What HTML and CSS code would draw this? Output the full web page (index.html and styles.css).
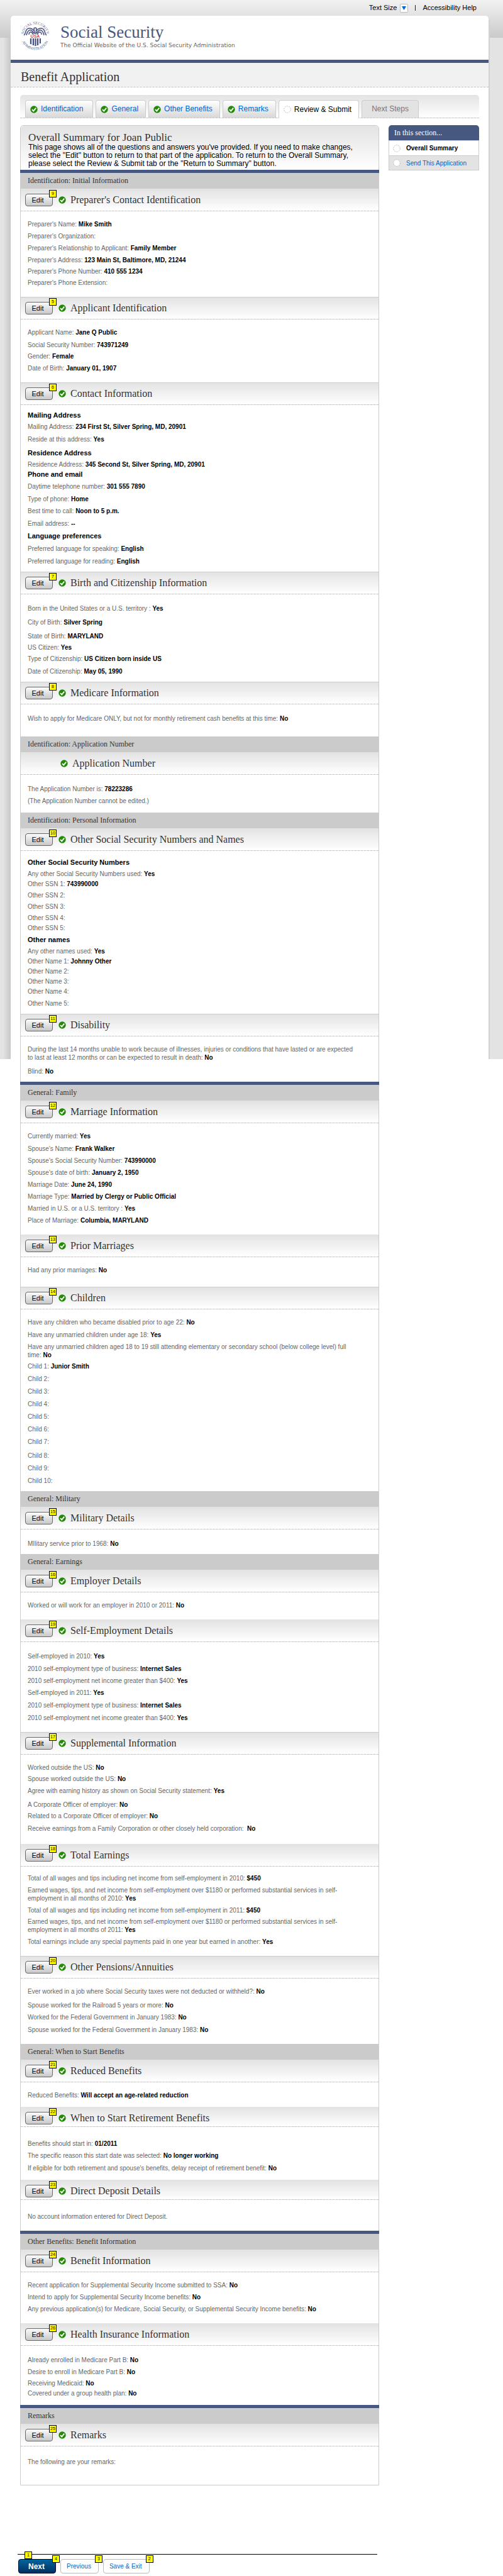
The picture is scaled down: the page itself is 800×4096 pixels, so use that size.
FILE: index.html
```html
<!DOCTYPE html>
<html lang="en">
<head>
<meta charset="utf-8">
<title>Benefit Application - Social Security</title>
<meta name="viewport" content="width=device-width, initial-scale=1">
<link rel="stylesheet" href="styles.css">
</head>
<body>
<svg class="defs" aria-hidden="true">
  <symbol id="check" viewBox="0 0 12 12"><circle cx="6" cy="6" r="5.7" fill="#238a06"/><path d="M3 6.1l2.3 2.4L9.2 3.6" fill="none" stroke="#fff" stroke-width="1.9"/></symbol>
  <symbol id="ring" viewBox="0 0 12 12"><circle cx="6" cy="6" r="5.3" fill="#fff" stroke="#bbb" stroke-dasharray="2 1.3"/></symbol>
</svg>

<nav class="topbar" aria-label="Tools">
  <span>Text Size</span>
  <button class="size-btn" type="button" aria-label="Change text size"><svg width="7" height="6" viewBox="0 0 7 6"><path d="M0 0h7L3.500 6z" fill="#06c"/></svg></button>
  <span class="divider"></span>
  <a href="#">Accessibility Help</a>
</nav>

<div class="page">
  <header class="masthead">
    <svg class="seal" viewBox="0 0 48 48" role="img" aria-label="Social Security Administration seal">
      <defs>
        <path id="arc-top" d="M5.500 24a18.500 18.500 0 0 1 37 0"/>
        <path id="arc-bottom" d="M1.500 24a22.500 22.500 0 0 0 45 0"/>
      </defs>
      <g class="seal-ring">
        <text><textPath href="#arc-top" startOffset="50%" text-anchor="middle">SOCIAL SECURITY</textPath></text>
        <text><textPath href="#arc-bottom" startOffset="50%" text-anchor="middle">ADMINISTRATION</textPath></text>
      </g>
      <g fill="none" stroke="#46507f" stroke-width="1.500">
        <path d="M6 23c2-1 2-3 3-6s3-5 6-5 5 1 7 4M42 23c-2-1-2-3-3-6s-3-5-6-5-5 1-7 4"/>
        <path d="M10 23c1-4 2-7 5-8s5 2 7 5M38 23c-1-4-2-7-5-8s-5 2-7 5"/>
        <path d="M14 22c0-2 1-4 3-4s3 2 4 4M34 22c0-2-1-4-3-4s-3 2-4 4"/>
        <path d="M22 12l2-1 2 1-1 8h-2z"/>
      </g>
      <text class="seal-usa" x="24" y="27" text-anchor="middle">USA</text>
      <g fill="#46507f"><path d="M15 28h18v7c0 3-4 4-9 6-5-2-9-3-9-6z" fill="#e2e4ee"/><path d="M16 28h2v9h-2zM20 28h2v11h-2zM23.500 28h2v12h-2zM27 28h2v11h-2zM31 28h2v8h-2z"/></g>
    </svg>
    <div>
      <div class="brand">Social Security</div>
      <div class="tagline">The Official Website of the U.S. Social Security Administration</div>
    </div>
  </header>
  <h1 class="app-title">Benefit Application</h1>

  <nav class="tabs" aria-label="Application steps">
    <a class="tab" href="#"><svg class="icon"><use href="#check"/></svg>Identification</a>
    <a class="tab" href="#"><svg class="icon"><use href="#check"/></svg>General</a>
    <a class="tab" href="#"><svg class="icon"><use href="#check"/></svg>Other Benefits</a>
    <a class="tab" href="#"><svg class="icon"><use href="#check"/></svg>Remarks</a>
    <a class="tab current" href="#" aria-current="step"><svg class="icon"><use href="#ring"/></svg>Review &amp; Submit</a>
    <span class="tab pending">Next Steps</span>
  </nav>

  <div class="columns">
    <main class="summary">
      <div class="intro">
        <h2>Overall Summary for Joan Public</h2>
        <p>This page shows all of the questions and answers you've provided. If you need to make changes, select the "Edit" button to return to that part of the application. To return to the Overall Summary, please select the Review &amp; Submit tab or the "Return to Summary" button.</p>
      </div>

      <h2 class="band major">Identification: Initial Information</h2>
      <div class="bar"><span class="tagged"><button class="edit" type="button">Edit</button><i class="num">9</i></span><svg class="icon"><use href="#check"/></svg><h3>Preparer's Contact Identification</h3></div>
      <div class="body pt14 pb16">
        <p>Preparer's Name: <b>Mike Smith</b></p>
        <p>Preparer's Organization:</p>
        <p>Preparer's Relationship to Applicant: <b>Family Member</b></p>
        <p>Preparer's Address: <b>123 Main St, Baltimore, MD, 21244</b></p>
        <p class="g5">Preparer's Phone Number: <b>410 555 1234</b></p>
        <p class="g5">Preparer's Phone Extension:</p>
      </div>

      <div class="bar"><span class="tagged"><button class="edit" type="button">Edit</button><i class="num">5</i></span><svg class="icon"><use href="#check"/></svg><h3>Applicant Identification</h3></div>
      <div class="body pt14 pb16">
        <p>Applicant Name: <b>Jane Q Public</b></p>
        <p class="g7">Social Security Number: <b>743971249</b></p>
        <p class="g5">Gender: <b>Female</b></p>
        <p>Date of Birth: <b>January 01, 1907</b></p>
      </div>

      <div class="bar"><span class="tagged"><button class="edit" type="button">Edit</button><i class="num">6</i></span><svg class="icon"><use href="#check"/></svg><h3>Contact Information</h3></div>
      <div class="body pt10 pb10">
        <h4>Mailing Address</h4>
        <p class="g5">Mailing Address: <b>234 First St, Silver Spring, MD, 20901</b></p>
        <p class="g7">Reside at this address: <b>Yes</b></p>
        <h4 class="g9">Residence Address</h4>
        <p class="g5">Residence Address: <b>345 Second St, Silver Spring, MD, 20901</b></p>
        <h4 class="g3">Phone and email</h4>
        <p>Daytime telephone number: <b>301 555 7890</b></p>
        <p class="g7">Type of phone: <b>Home</b></p>
        <p>Best time to call: <b>Noon to 5 p.m.</b></p>
        <p class="g7">Email address: <b>--</b></p>
        <h4 class="g7">Language preferences</h4>
        <p class="g7">Preferred language for speaking: <b>English</b></p>
        <p class="g7">Preferred language for reading: <b>English</b></p>
      </div>

      <div class="bar"><span class="tagged"><button class="edit" type="button">Edit</button><i class="num">7</i></span><svg class="icon"><use href="#check"/></svg><h3>Birth and Citizenship Information</h3></div>
      <div class="body pt16 pb10">
        <p>Born in the United States or a U.S. territory : <b>Yes</b></p>
        <p class="g9">City of Birth: <b>Silver Spring</b></p>
        <p class="g9">State of Birth: <b>MARYLAND</b></p>
        <p class="g5">US Citizen: <b>Yes</b></p>
        <p class="g5">Type of Citizenship: <b>US Citizen born inside US</b></p>
        <p class="g7">Date of Citizenship: <b>May 05, 1990</b></p>
      </div>

      <div class="bar"><span class="tagged"><button class="edit" type="button">Edit</button><i class="num">8</i></span><svg class="icon"><use href="#check"/></svg><h3>Medicare Information</h3></div>
      <div class="body pt16 pb22">
        <p>Wish to apply for Medicare ONLY, but not for monthly retirement cash benefits at this time: <b>No</b></p>
      </div>

      <h2 class="band">Identification: Application Number</h2>
      <div class="bar fixed"><svg class="icon"><use href="#check"/></svg><h3>Application Number</h3></div>
      <div class="body pt16 pb12">
        <p>The Application Number is: <b>78223286</b></p>
        <p>(The Application Number cannot be edited.)</p>
      </div>

      <h2 class="band">Identification: Personal Information</h2>
      <div class="bar"><span class="tagged"><button class="edit" type="button">Edit</button><i class="num">10</i></span><svg class="icon"><use href="#check"/></svg><h3>Other Social Security Numbers and Names</h3></div>
      <div class="body pt12 pb10">
        <h4>Other Social Security Numbers</h4>
        <p class="g5">Any other Social Security Numbers used: <b>Yes</b></p>
        <p class="g3">Other SSN 1: <b>743990000</b></p>
        <p class="g5">Other SSN 2:</p>
        <p class="g5">Other SSN 3:</p>
        <p class="g5">Other SSN 4:</p>
        <p class="g3">Other SSN 5:</p>
        <h4>Other names</h4>
        <p class="g5">Any other names used: <b>Yes</b></p>
        <p class="g3">Other Name 1: <b>Johnny Other</b></p>
        <p class="g3">Other Name 2:</p>
        <p class="g3">Other Name 3:</p>
        <p class="g3">Other Name 4:</p>
        <p>Other Name 5:</p>
      </div>

      <div class="bar"><span class="tagged"><button class="edit" type="button">Edit</button><i class="num">11</i></span><svg class="icon"><use href="#check"/></svg><h3>Disability</h3></div>
      <div class="body pt14 pb10">
        <p>During the last 14 months unable to work because of illnesses, injuries or conditions that have lasted or are expected to last at least 12 months or can be expected to result in death: <b>No</b></p>
        <p class="g9">Blind: <b>No</b></p>
      </div>

      <h2 class="band major">General: Family</h2>
      <div class="bar"><span class="tagged"><button class="edit" type="button">Edit</button><i class="num">12</i></span><svg class="icon"><use href="#check"/></svg><h3>Marriage Information</h3></div>
      <div class="body pt14 pb16">
        <p>Currently married: <b>Yes</b></p>
        <p class="g7">Spouse's Name: <b>Frank Walker</b></p>
        <p>Spouse's Social Security Number: <b>743990000</b></p>
        <p>Spouse's date of birth: <b>January 2, 1950</b></p>
        <p>Marriage Date: <b>June 24, 1990</b></p>
        <p>Marriage Type: <b>Married by Clergy or Public Official</b></p>
        <p>Married in U.S. or a U.S. territory : <b>Yes</b></p>
        <p>Place of Marriage: <b>Columbia, MARYLAND</b></p>
      </div>

      <div class="bar flat"><span class="tagged"><button class="edit" type="button">Edit</button><i class="num">13</i></span><svg class="icon"><use href="#check"/></svg><h3>Prior Marriages</h3></div>
      <div class="body pt14 pb20">
        <p>Had any prior marriages: <b>No</b></p>
      </div>

      <div class="bar"><span class="tagged"><button class="edit" type="button">Edit</button><i class="num">14</i></span><svg class="icon"><use href="#check"/></svg><h3>Children</h3></div>
      <div class="body pt14 pb10">
        <p>Have any children who became disabled prior to age 22: <b>No</b></p>
        <p class="g7">Have any unmarried children under age 18: <b>Yes</b></p>
        <p>Have any unmarried children aged 18 to 19 still attending elementary or secondary school (below college level) full time: <b>No</b></p>
        <p class="g5">Child 1: <b>Junior Smith</b></p>
        <p class="g7">Child 2:</p>
        <p class="g7">Child 3:</p>
        <p class="g7">Child 4:</p>
        <p class="g7">Child 5:</p>
        <p class="g7">Child 6:</p>
        <p class="g7">Child 7:</p>
        <p class="g9">Child 8:</p>
        <p class="g7">Child 9:</p>
        <p class="g7">Child 10:</p>
      </div>

      <h2 class="band">General: Military</h2>
      <div class="bar"><span class="tagged"><button class="edit" type="button">Edit</button><i class="num">15</i></span><svg class="icon"><use href="#check"/></svg><h3>Military Details</h3></div>
      <div class="body pt16 pb10">
        <p>MIlitary service prior to 1968: <b>No</b></p>
      </div>

      <h2 class="band">General: Earnings</h2>
      <div class="bar"><span class="tagged"><button class="edit" type="button">Edit</button><i class="num">16</i></span><svg class="icon"><use href="#check"/></svg><h3>Employer Details</h3></div>
      <div class="body pt14 pb16">
        <p>Worked or will work for an employer in 2010 or 2011: <b>No</b></p>
      </div>

      <div class="bar flat"><span class="tagged"><button class="edit" type="button">Edit</button><i class="num">19</i></span><svg class="icon"><use href="#check"/></svg><h3>Self-Employment Details</h3></div>
      <div class="body pt16 pb16">
        <p>Self-employed in 2010: <b>Yes</b></p>
        <p class="g7">2010 self-employment type of business: <b>Internet Sales</b></p>
        <p>2010 self-employment net income greater than $400: <b>Yes</b></p>
        <p>Self-employed in 2011: <b>Yes</b></p>
        <p class="g7">2010 self-employment type of business: <b>Internet Sales</b></p>
        <p class="g7">2010 self-employment net income greater than $400: <b>Yes</b></p>
      </div>

      <div class="bar"><span class="tagged"><button class="edit" type="button">Edit</button><i class="num">17</i></span><svg class="icon"><use href="#check"/></svg><h3>Supplemental Information</h3></div>
      <div class="body pt14 pb18">
        <p>Worked outside the US: <b>No</b></p>
        <p class="g5">Spouse worked outside the US: <b>No</b></p>
        <p>Agree with earning history as shown on Social Security statement: <b>Yes</b></p>
        <p class="g9">A Corporate Officer of employer: <b>No</b></p>
        <p class="g5">Related to a Corporate Officer of employer: <b>No</b></p>
        <p class="g7">Receive earnings from a Family Corporation or other closely held corporation: &nbsp;<b>No</b></p>
      </div>

      <div class="bar flat"><span class="tagged"><button class="edit" type="button">Edit</button><i class="num">18</i></span><svg class="icon"><use href="#check"/></svg><h3>Total Earnings</h3></div>
      <div class="body pt12 pb16">
        <p>Total of all wages and tips including net income from self-employment in 2010: <b>$450</b></p>
        <p>Earned wages, tips, and net income from self-employment over $1180 or performed substantial services in self-employment in all months of 2010: <b>Yes</b></p>
        <p>Total of all wages and tips including net income from self-employment in 2011: <b>$450</b></p>
        <p class="g5">Earned wages, tips, and net income from self-employment over $1180 or performed substantial services in self-employment in all months of 2011: <b>Yes</b></p>
        <p>Total earnings include any special payments paid in one year but earned in another: <b>Yes</b></p>
      </div>

      <div class="bar"><span class="tagged"><button class="edit" type="button">Edit</button><i class="num">20</i></span><svg class="icon"><use href="#check"/></svg><h3>Other Pensions/Annuities</h3></div>
      <div class="body pt14 pb16">
        <p>Ever worked in a job where Social Security taxes were not deducted or withheld?: <b>No</b></p>
        <p class="g9">Spouse worked for the Railroad 5 years or more: <b>No</b></p>
        <p>Worked for the Federal Government in January 1983: <b>No</b></p>
        <p class="g7">Spouse worked for the Federal Government in January 1983: <b>No</b></p>
      </div>

      <h2 class="band">General: When to Start Benefits</h2>
      <div class="bar"><span class="tagged"><button class="edit" type="button">Edit</button><i class="num">21</i></span><svg class="icon"><use href="#check"/></svg><h3>Reduced Benefits</h3></div>
      <div class="body pt14 pb12">
        <p>Reduced Benefits: <b>Will accept an age-related reduction</b></p>
      </div>

      <div class="bar flat compact"><span class="tagged"><button class="edit" type="button">Edit</button><i class="num">22</i></span><svg class="icon"><use href="#check"/></svg><h3>When to Start Retirement Benefits</h3></div>
      <div class="body pt20 pb12">
        <p>Benefits should start in: <b>01/2011</b></p>
        <p>The specific reason this start date was selected: <b>No longer working</b></p>
        <p class="g7">If eligible for both retirement and spouse's benefits, delay receipt of retirement benefit: <b>No</b></p>
      </div>

      <div class="bar flat compact"><span class="tagged"><button class="edit" type="button">Edit</button><i class="num">23</i></span><svg class="icon"><use href="#check"/></svg><h3>Direct Deposit Details</h3></div>
      <div class="body pt20 pb16">
        <p>No account information entered for Direct Deposit.</p>
      </div>

      <h2 class="band major">Other Benefits: Benefit Information</h2>
      <div class="bar"><span class="tagged"><button class="edit" type="button">Edit</button><i class="num">24</i></span><svg class="icon"><use href="#check"/></svg><h3>Benefit Information</h3></div>
      <div class="body pt14 pb16">
        <p>Recent application for Supplemental Security Income submitted to SSA: <b>No</b></p>
        <p>Intend to apply for Supplemental Security Income benefits: <b>No</b></p>
        <p>Any previous application(s) for Medicare, Social Security, or Supplemental Security Income benefits: <b>No</b></p>
      </div>

      <div class="bar flat"><span class="tagged"><button class="edit" type="button">Edit</button><i class="num">26</i></span><svg class="icon"><use href="#check"/></svg><h3>Health Insurance Information</h3></div>
      <div class="body pt16 pb12">
        <p>Already enrolled in Medicare Part B: <b>No</b></p>
        <p>Desire to enroll in Medicare Part B: <b>No</b></p>
        <p class="g5">Receiving Medicaid: <b>No</b></p>
        <p class="g3">Covered under a group health plan: <b>No</b></p>
      </div>

      <h2 class="band major">Remarks</h2>
      <div class="bar"><span class="tagged"><button class="edit" type="button">Edit</button><i class="num">25</i></span><svg class="icon"><use href="#check"/></svg><h3>Remarks</h3></div>
      <div class="body pt18 pb30">
        <p>The following are your remarks:</p>
      </div>
    </main>

    <aside class="section-nav">
      <h2>In this section...</h2>
      <a class="here" href="#" aria-current="page"><svg class="icon"><use href="#ring"/></svg>Overall Summary</a>
      <a href="#"><svg class="icon"><use href="#ring"/></svg>Send This Application</a>
    </aside>
  </div>

  <footer class="actions">
    <i class="num rule-num">1</i>
    <span class="tagged"><button class="btn primary" type="button">Next</button><i class="num">4</i></span>
    <span class="tagged"><button class="btn" type="button">Previous</button><i class="num">3</i></span>
    <span class="tagged"><button class="btn" type="button">Save &amp; Exit</button><i class="num">2</i></span>
  </footer>
</div>
</body>
</html>
```
FILE: styles.css
```css
* { box-sizing: border-box; }

body {
  margin: 0;
  font: 10px/13px "Liberation Sans", Arial, sans-serif;
  color: #000;
  background-color: #fff;
  background-image:
    linear-gradient(to right, #e3e3e3, #c8c8c8),
    linear-gradient(#d2d2d2, #d2d2d2),
    linear-gradient(#f2f2f2, #cacaca),
    linear-gradient(#e3e3e3, #e3e3e3);
  background-position: 5px 60px, right 21px top 32px, 0 0, 0 0;
  background-size: 12px 1624px, 2px 1652px, 100% 60px, 100% 1684px;
  background-repeat: no-repeat;
}

a { color: #06c; text-decoration: none; }
h1, h2, h3, h4, p { margin: 0; font-weight: normal; }
button { font-family: inherit; cursor: pointer; }
.defs { display: none; }
.icon { width: 12px; height: 12px; flex: none; }

.topbar {
  display: flex;
  align-items: center;
  justify-content: flex-end;
  height: 25px;
  padding-right: 42px;
  font-size: 11px;
}
.topbar a { color: #000; }
.size-btn {
  display: flex;
  align-items: center;
  justify-content: center;
  width: 13px;
  height: 14px;
  margin: 0 11px 0 5px;
  padding: 0;
  border: 1px solid #bbb;
  border-radius: 2px;
  background: #fff;
}
.divider { width: 1px; height: 9px; margin-right: 11px; background: #222; }

.page {
  margin: 0 23px 0 17px;
  padding-bottom: 6px;
  border-radius: 5px 5px 0 0;
  background: #fff;
}

.masthead {
  display: flex;
  align-items: center;
  gap: 16px;
  height: 75px;
  padding: 0 15px 6px;
  border-bottom: 5px solid #46587f;
}
.seal { width: 48px; height: 48px; overflow: visible; }
.seal-ring { font: 6px "Liberation Serif", serif; fill: #565f8c; }
.seal-usa { font: bold 7px "Liberation Sans", sans-serif; fill: #dd4b4b; }
.brand { font: 27px/29px "Liberation Serif", Georgia, serif; color: #46587f; }
.tagline { font: 9px/12px "DejaVu Sans", Verdana, sans-serif; color: #666; }

.app-title {
  height: 39px;
  padding: 0 16px;
  border-bottom: 1px dashed #c4c4c4;
  background: #f1f1f1;
  font: 20px/45px "Liberation Serif", Georgia, serif;
  color: #333;
}

.tabs {
  display: flex;
  gap: 4px;
  margin: 12px 15px 0;
  padding: 8px 8px 0;
  border-bottom: 1px dashed #c4c4c4;
  border-radius: 5px 5px 0 0;
  background: linear-gradient(#e3e3e3, #fff);
}
.tab {
  display: flex;
  align-items: center;
  gap: 5px;
  height: 28px;
  padding: 0 11px 0 7px;
  border: 1px solid #ccc;
  border-bottom: 0;
  border-radius: 4px 4px 0 0;
  background: linear-gradient(#fff, #d8d8d8);
  font-size: 12px;
}
.tab:first-child { padding-right: 15px; }
.tab.current { height: 29px; margin-bottom: -1px; background: #fff; color: #000; }
.tab.pending { padding: 0 15px; background: #e3e3e3; color: #777; }

.columns {
  display: flex;
  align-items: flex-start;
  gap: 15px;
  margin: 11px 15px 0;
}
.summary {
  flex: 1;
  border: 1px solid #ccc;
  border-radius: 5px 5px 0 0;
}
.intro {
  padding: 9px 12px 3px;
  background: linear-gradient(#e3e3e3, #fff);
  border-radius: 5px 5px 0 0;
  font-size: 12px;
}
.intro h2 { font: 17px/19px "Liberation Serif", Georgia, serif; color: #333; }
.intro p { max-width: 530px; }

.band {
  height: 25px;
  padding: 0 11px;
  background: #cbcbcb;
  font: 12px/24px "Liberation Serif", Georgia, serif;
  color: #333;
}
.band.major { height: 30px; margin: 0 -1px; padding: 0 12px; border-top: 5px solid #46587f; }

.bar {
  display: flex;
  align-items: center;
  height: 36px;
  padding: 0 7px;
  border-top: 1px solid #ccc;
  border-bottom: 1px dashed #c4c4c4;
  background: linear-gradient(#e3e3e3, #fff);
}
.band + .bar, .bar.flat { border-top-color: #e3e3e3; }
.bar.compact { height: 32px; padding-top: 3px; }
.bar.fixed { padding-left: 63px; }
.bar .tagged { margin-right: 9px; }
.bar h3 { margin-left: 7px; font: 16px/20px "Liberation Serif", Georgia, serif; color: #333; }

.tagged { position: relative; display: flex; }
.edit {
  width: 44px;
  height: 20px;
  padding: 0 4px 0 0;
  border: 1px solid #666;
  border-radius: 4px;
  background: linear-gradient(#fbfbfb, #c8c8c8);
  font-size: 11px;
  color: #000;
}
.num {
  position: absolute;
  top: -6px;
  right: -6px;
  width: 12px;
  height: 12px;
  border: 1px solid #000;
  background: #ff0;
  font: 7px/10px "Liberation Sans", Arial, sans-serif;
  text-align: center;
  color: #000;
}

.body { padding: 0 31px 0 11px; color: #666; }
.body b { color: #000; }
.body h4 { font-size: 11px; font-weight: bold; color: #000; }
.body > * + * { margin-top: 6px; }
.body > .g3 { margin-top: 3px; }
.body > .g5 { margin-top: 5px; }
.body > .g7 { margin-top: 7px; }
.body > .g9 { margin-top: 9px; }
.pt10 { padding-top: 10px; }
.pt12 { padding-top: 12px; }
.pt14 { padding-top: 14px; }
.pt16 { padding-top: 16px; }
.pt18 { padding-top: 18px; }
.pt20 { padding-top: 20px; }
.pb10 { padding-bottom: 10px; }
.pb12 { padding-bottom: 12px; }
.pb16 { padding-bottom: 16px; }
.pb18 { padding-bottom: 18px; }
.pb20 { padding-bottom: 20px; }
.pb22 { padding-bottom: 22px; }
.pb30 { padding-bottom: 30px; }

.section-nav { width: 144px; }
.section-nav h2 {
  height: 24px;
  padding: 0 9px;
  border-radius: 5px 5px 0 0;
  background: #46587f;
  font: 12px/24px "Liberation Serif", Georgia, serif;
  color: #fff;
}
.section-nav a {
  display: flex;
  align-items: center;
  gap: 9px;
  height: 24px;
  padding: 0 6px;
  border: 1px solid #ccc;
  background: #e3e3e3;
}
.section-nav .here { background: #fff; border-bottom: 0; color: #000; font-weight: bold; }

.actions {
  position: relative;
  display: flex;
  gap: 7px;
  margin: 109px 177px 0 11px;
  padding: 7px 1px 0;
  border-top: 1px solid #000;
}
.btn {
  height: 23px;
  padding: 0 11px 0 9px;
  border: 1px solid #bbb;
  border-radius: 4px;
  background: #fff;
  font-size: 10px;
  color: #06c;
}
.btn.primary {
  padding: 0 17px 0 15px;
  border-color: #003;
  background: linear-gradient(#00659f, #003060);
  font-size: 12px;
  font-weight: bold;
  color: #fff;
}
.num.rule-num { top: -5px; right: auto; left: 11px; }
```
